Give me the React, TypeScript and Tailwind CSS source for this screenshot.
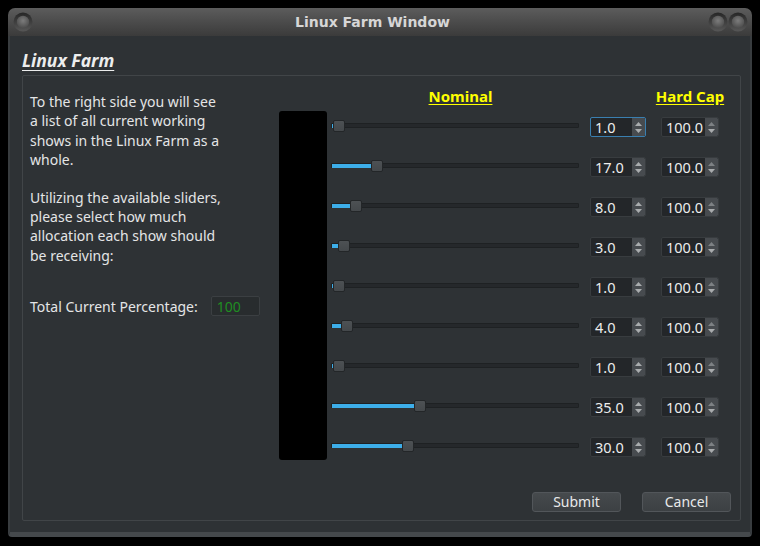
import React from "react";

const rows = [1, 17, 8, 3, 1, 4, 1, 35, 30];

function Knob({ id }: { id: string }) {
  return (
    <svg width="20" height="20" viewBox="0 0 20 20">
      <defs>
        <linearGradient id={`r${id}`} x1="0" y1="0" x2="0" y2="1">
          <stop offset="0" stopColor="#262626" />
          <stop offset="1" stopColor="#575757" />
        </linearGradient>
        <radialGradient id={`k${id}`} cx="0.5" cy="0.4" r="0.6">
          <stop offset="0" stopColor="#7c7c7c" />
          <stop offset="1" stopColor="#4c4c4c" />
        </radialGradient>
      </defs>
      <circle cx="10" cy="10" r="9.5" fill={`url(#r${id})`} />
      <circle cx="10" cy="10" r="6.2" fill={`url(#k${id})`} />
    </svg>
  );
}

function Arrows({ dimUp }: { dimUp?: boolean }) {
  return (
    <div className="w-[13px] h-full bg-[#474b4f] flex flex-col items-center justify-center gap-[3px] rounded-r-[1px]">
      <svg width="7" height="4" viewBox="0 0 7 4">
        <path d="M0 4 L3.5 0 L7 4 Z" fill={dimUp ? "#7d8184" : "#a9acae"} />
      </svg>
      <svg width="7" height="4" viewBox="0 0 7 4">
        <path d="M0 0 L3.5 4 L7 0 Z" fill="#a9acae" />
      </svg>
    </div>
  );
}

function Spin({ value, wide, focused }: { value: string; wide?: boolean; focused?: boolean }) {
  return (
    <div
      className={`flex h-[20px] rounded-[2px] border bg-[#232629] overflow-hidden ${
        wide ? "w-[58px]" : "w-[56px]"
      } ${focused ? "border-[#3a7fb0]" : "border-[#383c3f]"}`}
    >
      <div className="flex-1 flex items-center pl-[4px] text-[14.5px] leading-none text-[#eceded]">
        {value}
      </div>
      <Arrows dimUp={wide} />
    </div>
  );
}

function Slider({ value }: { value: number }) {
  const left = Math.round(value * 2.38);
  return (
    <div className="relative w-[250px] h-[14px] flex items-center">
      <div className="w-[248px] h-[5px] rounded-[1px] bg-[#25282b] border border-[#1e2123]" />
      <div
        className="absolute left-[1px] top-[5px] h-[4px] bg-[#3daee9]"
        style={{ width: Math.max(left, 1) }}
      />
      <div
        className="absolute top-[1px] w-[12px] h-[12px] rounded-[2px] border border-[#232628] bg-gradient-to-b from-[#4d5154] to-[#44484b]"
        style={{ left }}
      />
    </div>
  );
}

export default function App() {
  return (
    <div className="w-[760px] h-[546px] bg-black pt-[8px] pl-[8px] font-['Noto_Sans',sans-serif] text-[#e4e5e6]">
      <div className="w-[744px] h-[529px] flex flex-col">
        {/* title bar */}
        <div className="h-[28px] flex items-center rounded-t-[7px] bg-gradient-to-b from-[#5c5c5c] to-[#3b3b3b] pl-[5px] pr-[4px]">
          <div className="w-[24px] flex items-center">
            <Knob id="a" />
          </div>
          <div className="flex-1 text-center font-['DejaVu_Sans',sans-serif] font-bold text-[14px] text-[#d6d6d6] pt-[1px]">
            Linux Farm Window
          </div>
          <div className="flex items-center">
            <Knob id="b" />
            <Knob id="c" />
          </div>
        </div>
        {/* body */}
        <div className="flex-1 bg-[#2e3235] border-x-2 border-b-[5px] border-x-[#383c3f] border-b-[#45494c] rounded-b-[4px] pl-[12px] pt-[13px]">
          <div className="h-[23px] leading-[23px] text-[17.5px] font-bold italic underline underline-offset-[3px] text-[#eceded]">
            Linux Farm
          </div>
          <div className="mt-[3px] w-[719px] h-[446px] border border-[#414548] rounded-[2px] flex flex-col">
            <div className="flex items-start flex-1">
              {/* left column */}
              <div className="w-[256px] shrink-0 pl-[7px] pt-[16px] text-[14px] leading-[19.4px]">
                <p>
                  To the right side you will see
                  <br />a list of all current working
                  <br />
                  shows in the Linux Farm as a
                  <br />
                  whole.
                </p>
                <p className="mt-[18px]">
                  Utilizing the available sliders,
                  <br />
                  please select how much
                  <br />
                  allocation each show should
                  <br />
                  be receiving:
                </p>
                <div className="mt-[31px] flex items-center h-[20px] gap-[13px]">
                  <span>Total Current Percentage:</span>
                  <div className="w-[49px] h-[20px] bg-[#282c2e] border border-[#3b3f42] rounded-[2px] flex items-center pl-[5px] text-[#1f8e22]">
                    100
                  </div>
                </div>
              </div>
              {/* right panel */}
              <div className="pt-[10px] flex flex-col shrink-0">
                <div className="flex h-[20px] items-center text-[15px] font-bold text-[#ffff00] whitespace-nowrap">
                  <div className="w-[52px] shrink-0" />
                  <div className="w-[250px] shrink-0 flex justify-center pl-[9px]">
                    <span className="underline underline-offset-[2px]">Nominal</span>
                  </div>
                  <div className="w-[80px] shrink-0" />
                  <div className="w-[58px] shrink-0 flex justify-center">
                    <span className="underline underline-offset-[2px]">Hard Cap</span>
                  </div>
                </div>
                <div className="flex items-start">
                  <div className="w-[48px] h-[349px] mt-[5px] bg-black rounded-[3px] shrink-0" />
                  <div className="ml-[4px] flex flex-col">
                    {rows.map((v, i) => (
                      <div key={i} className="h-[40px] flex items-center">
                        <div className="w-[250px] flex items-center -mt-[1px]">
                          <Slider value={v} />
                        </div>
                        <div className="ml-[9px] mt-[2px]">
                          <Spin value={v.toFixed(1)} focused={i === 0} />
                        </div>
                        <div className="ml-[15px] mt-[2px]">
                          <Spin value="100.0" wide />
                        </div>
                      </div>
                    ))}
                  </div>
                </div>
              </div>
            </div>
            <div className="flex justify-end gap-[21px] pr-[9px] pb-[8px]">
              <button className="w-[89px] h-[20px] rounded-[3px] border border-[#52565a] bg-gradient-to-b from-[#464a4d] to-[#3c4043] text-[14px] leading-none text-[#e8e9ea]">
                Submit
              </button>
              <button className="w-[89px] h-[20px] rounded-[3px] border border-[#52565a] bg-gradient-to-b from-[#464a4d] to-[#3c4043] text-[14px] leading-none text-[#e8e9ea]">
                Cancel
              </button>
            </div>
          </div>
        </div>
      </div>
    </div>
  );
}
